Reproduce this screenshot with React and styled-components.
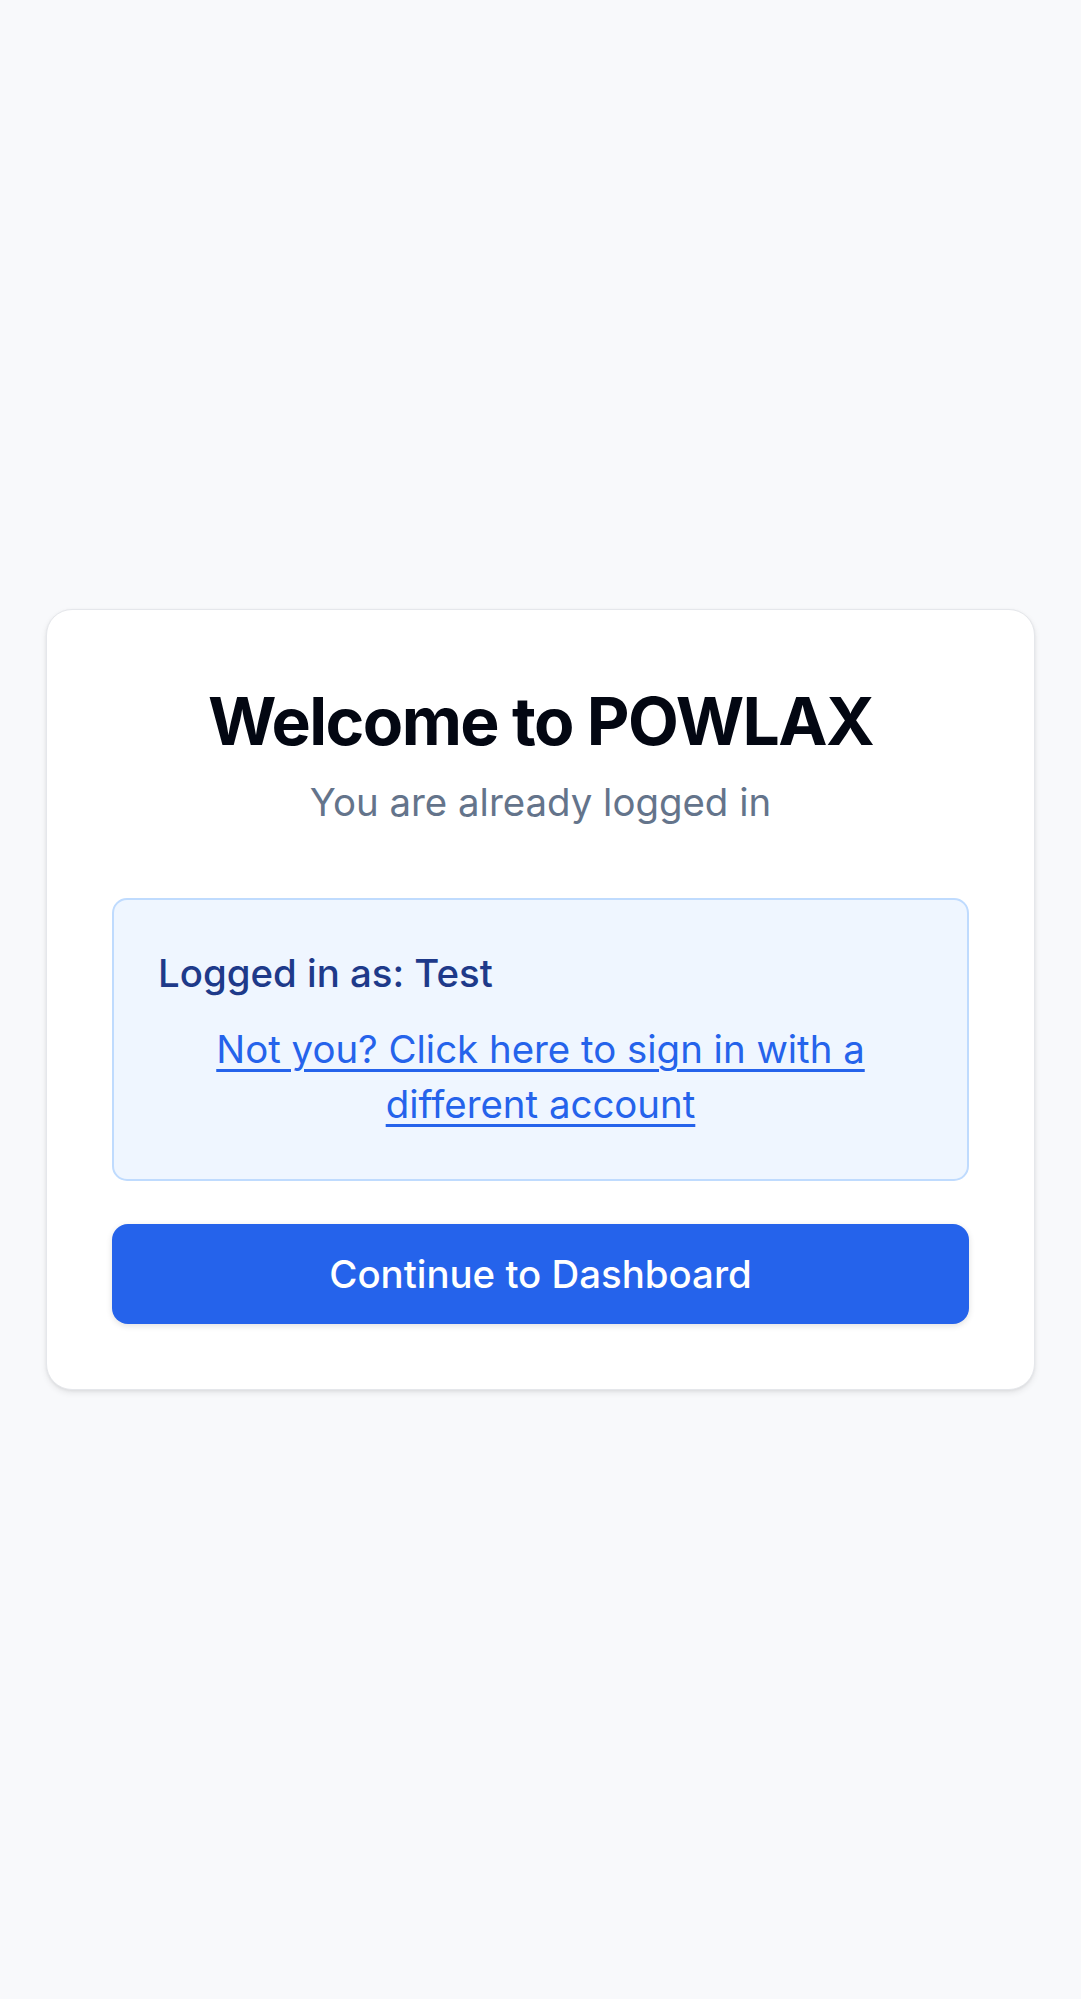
import styled, { createGlobalStyle } from 'styled-components'

const GlobalStyle = createGlobalStyle`
  html, body {
    margin: 0;
    padding: 0;
    background-color: #f8f9fb;
    font-family: Inter, 'Noto Sans', sans-serif;
  }
  * {
    box-sizing: border-box;
  }
`

const Page = styled.div`
  min-height: 100vh;
  display: flex;
  align-items: center;
  justify-content: center;
  padding: 0 46px;
`

const Card = styled.div`
  width: 100%;
  background-color: #ffffff;
  border: 1.5px solid #e5e7eb;
  border-radius: 26px;
  box-shadow: 0 3px 6px rgba(0, 0, 0, 0.08), 0 1px 3px rgba(0, 0, 0, 0.06);
  padding: 68px 65px 65px;
  display: flex;
  flex-direction: column;
`

const Header = styled.div`
  text-align: center;
  margin-bottom: 68px;
`

const Title = styled.h1`
  margin: 0;
  font-size: 66px;
  line-height: 86px;
  font-weight: 700;
  letter-spacing: -1.6px;
  color: #030712;
`

const Subtitle = styled.p`
  margin: 10px 0 0;
  font-size: 38.4px;
  line-height: 56px;
  color: #64748b;
`

const InfoBox = styled.div`
  background-color: #eff6ff;
  border: 2px solid #bfdbfe;
  border-radius: 15px;
  padding: 45px 44px 47px;
  margin-bottom: 43px;
`

const UserLine = styled.p`
  margin: 0 0 20px;
  font-size: 38.4px;
  line-height: 57px;
  font-weight: 500;
  color: #1e3a8a;
`

const SwitchLink = styled.a`
  display: block;
  text-align: center;
  font-size: 38.4px;
  line-height: 55px;
  color: #2563eb;
  text-decoration: underline;
  text-underline-offset: 6px;
  text-decoration-thickness: 2.5px;
  cursor: pointer;
`

const Button = styled.button`
  width: 100%;
  height: 100px;
  border: none;
  border-radius: 16px;
  background-color: #2563eb;
  color: #ffffff;
  font-family: inherit;
  font-size: 38.4px;
  font-weight: 500;
  box-shadow: 0 2px 6px rgba(0, 0, 0, 0.12);
  cursor: pointer;
`

export default function App() {
  return (
    <>
      <GlobalStyle />
      <Page>
        <Card>
          <Header>
            <Title>Welcome to POWLAX</Title>
            <Subtitle>You are already logged in</Subtitle>
          </Header>
          <InfoBox>
            <UserLine>Logged in as: Test</UserLine>
            <SwitchLink href="#">Not you? Click here to sign in with a different account</SwitchLink>
          </InfoBox>
          <Button>Continue to Dashboard</Button>
        </Card>
      </Page>
    </>
  )
}
